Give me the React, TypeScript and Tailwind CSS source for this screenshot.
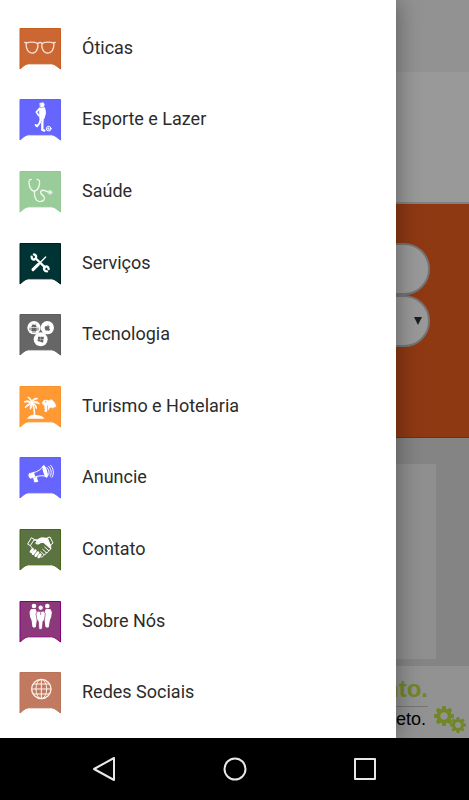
import React, { ReactNode } from "react";
import { FaApple, FaWindows } from "react-icons/fa";

const Badge = ({ color, edge, children }: { color: string; edge: string; children: ReactNode }) => (
  <svg viewBox="0 0 126 126" className="mt-0.5 h-[42px] w-[42px] shrink-0" aria-hidden="true">
    <path
      d="M3 1.500H124.500V123C114 116 108 108 98 107.500H28C18 108 12 116 3 123Z"
      fill={color}
      stroke={edge}
      strokeWidth="3"
    />
    {children}
  </svg>
);

const Glasses = () => (
  <g fill="none" stroke="#f6ddcf" strokeWidth="4" strokeLinecap="round">
    <path d="M21 46C30 41 46 41 55 46C59 52 55 74 42 75C28 77 21 64 21 46Z" />
    <path d="M70 46C78 41 96 41 105 46C105 64 98 77 84 75C70 74 66 52 70 46Z" />
    <path d="M56 47C60 43 66 43 70 47M22 44L17 43M104 44L109 43" />
  </g>
);

const Player = () => (
  <g stroke="#fff" fill="none" strokeLinecap="round" strokeLinejoin="round">
    <path d="M63 13L73 11L76 17L73 24L65 24Z" fill="#fff" strokeWidth="2" />
    <path d="M61 28L76 26L79 38L76 58L62 59L61 42Z" fill="#fff" strokeWidth="2" />
    <path d="M62 28L52 39L59 50M76 28L78 44L74 54" strokeWidth="5" />
    <path d="M66 58L62 72L54 82L50 78" strokeWidth="6" />
    <path d="M71 58L70 74L70 93L76 95" strokeWidth="7" />
    <circle cx="89" cy="89" r="7" strokeWidth="3" />
    <path d="M89 83V86M83 88L86 89M94 87L92 89M86 94L88 91M92 94L90 91" strokeWidth="2" />
    <circle cx="89" cy="89" r="2" fill="#fff" stroke="none" />
  </g>
);

const Stethoscope = () => (
  <g fill="none" stroke="#eef9ee" strokeWidth="4" strokeLinecap="round">
    <path d="M37 25C29 25 29 34 31 42C33 52 38 59 45 60C54 60 59 51 61 42C63 33 62 25 54 25" />
    <path d="M46 60C46 78 50 91 61 92C74 92 79 84 75 77C70 70 61 69 66 60C71 54 80 60 87 63" />
    <circle cx="93" cy="64" r="6" strokeWidth="2" />
    <circle cx="93" cy="64" r="2" fill="#eef9ee" />
  </g>
);

const Tools = () => (
  <g stroke="#fff" fill="none" strokeLinecap="round">
    <path d="M80 42L57 65" strokeWidth="4" />
    <path d="M58 64L42 80" strokeWidth="9" />
    <path d="M52 48L78 73" strokeWidth="7" />
    <path d="M45 34C53 36 53 44 47 49C42 51 38 48 38 41" strokeWidth="7" />
    <path d="M84 85C76 85 72 77 77 72C82 68 88 71 89 78" strokeWidth="7" />
  </g>
);

const Robot = () => (
  <g fill="#666" stroke="#666" strokeLinecap="round">
    <path d="M37 39C38 29 52 29 53 39Z" stroke="none" />
    <path d="M37 41H53V51H37Z" stroke="none" />
    <path d="M33 42V48M57 42V48M42 51V55M48 51V55" strokeWidth="3" />
    <path d="M39 29L41 32M51 29L49 32" strokeWidth="1" />
  </g>
);

const Systems = () => (
  <g fill="#666">
    <circle cx="45" cy="41" r="20" fill="#fff" />
    <circle cx="85" cy="41" r="20" fill="#fff" />
    <circle cx="65" cy="76" r="21" fill="#fff" />
    <Robot />
    <g color="#666">
      <FaApple x="74" y="30" size="22" />
      <g transform="rotate(8 65 76)">
        <FaWindows x="55" y="66" size="20" />
      </g>
    </g>
  </g>
);

const Palm = () => (
  <g fill="#fff" stroke="#fff" strokeLinecap="round">
    <path d="M24 98C30 87 42 84 52 87C63 87 72 91 76 98Z" stroke="none" />
    <path d="M39 50C45 62 47 75 46 88" fill="none" strokeWidth="5" />
    <path
      d="M39 51C31 43 22 43 15 48C25 47 32 49 39 51C30 53 20 57 18 66C27 58 34 56 39 51C34 58 33 64 34 70C38 64 40 58 39 51C46 56 50 61 52 68C53 58 48 53 39 51C48 49 55 51 61 54C57 45 48 44 39 51C42 43 49 39 57 38C46 34 39 40 39 51C37 40 33 34 26 33C32 39 36 44 39 51Z"
      strokeWidth="3"
      strokeLinejoin="round"
    />
    <path d="M72 46C76 41 86 41 89 46L88 56L84 59V75L80 78L77 74L79 70L77 67V59L71 54Z" strokeWidth="2" />
    <path d="M89 44L98 41L107 51L111 62L104 63L101 67L97 63L91 66L88 56Z" strokeWidth="2" />
    <path d="M89 59V70" strokeWidth="4" />
    <circle cx="80" cy="47" r="2" fill="#ff9933" stroke="none" />
  </g>
);

const Megaphone = () => (
  <g fill="none" stroke="#fff" strokeLinecap="round" strokeLinejoin="round">
    <path d="M31 50L44 46L48 60L34 64C29 60 28 54 31 50Z" fill="#fff" strokeWidth="2" />
    <path d="M43 47C57 44 66 37 73 27L83 59C73 55 62 55 48 60" strokeWidth="3" />
    <path d="M73 27C80 26 88 58 83 60C78 59 70 35 73 27Z" fill="#fff" strokeWidth="4" />
    <path d="M44 62L47 75L57 73L54 69L53 60" fill="#fff" strokeWidth="3" />
    <path d="M84 32C90 37 92 47 89 54M89 28C97 35 99 48 94 58M95 25C104 34 106 51 99 61" strokeWidth="3" />
  </g>
);

const Hands = () => (
  <g fill="none" stroke="#fff" strokeLinecap="round" strokeLinejoin="round">
    <path d="M38 27L46 31L34 50L27 46ZM86 26L93 24L102 42L95 48Z" strokeWidth="3" />
    <path d="M46 33L59 33M86 29L70 27C62 28 55 34 51 42C54 47 61 44 66 39L74 40L95 58" strokeWidth="4" />
    <path d="M67 30L84 30L94 48L91 54L75 39L65 37L57 42L54 41C58 34 61 31 67 30Z" fill="#fff" strokeWidth="2" />
    <path d="M35 51L41 59M95 48V58" strokeWidth="3" />
    <path d="M41 61L36 68M49 65L42 74M57 71L50 80M64 77L59 84" strokeWidth="8" />
    <path d="M95 58C95 63 91 66 88 64C89 70 84 73 81 70C82 76 77 79 74 76C74 82 70 85 65 84M88 64L77 54M81 70L71 61M74 76L66 68" strokeWidth="3" />
  </g>
);

const People = () => (
  <g fill="#fff" stroke="#fff" strokeLinejoin="round">
    <circle cx="45" cy="15" r="7" stroke="none" />
    <circle cx="85" cy="15" r="7" stroke="none" />
    <path d="M36 26L49 25L53 37L52 56L49 78H42L39 57L35 49L33 34Z" strokeWidth="3" />
    <path d="M94 26L81 25L77 37L78 56L81 78H88L91 57L95 49L97 34Z" strokeWidth="3" />
    <circle cx="65" cy="20" r="8" stroke="#8b397b" strokeWidth="3" />
    <path d="M56 30L65 32L74 30L79 38L76 57L72 61L69 85H60L58 61L54 56L51 39Z" stroke="#8b397b" strokeWidth="2" />
    <path d="M65 34V42" stroke="#8b397b" strokeWidth="2" />
  </g>
);

const Globe = () => (
  <g fill="none" stroke="#fff3ec" strokeWidth="3">
    <circle cx="67" cy="51" r="29" strokeWidth="4" />
    <ellipse cx="67" cy="51" rx="16" ry="29" />
    <path d="M67 22V80M38 51H96M43 36H91M43 66H91" />
  </g>
);

const categories = [
  { name: "Óticas", color: "#cc6633", edge: "#c65f20", icon: <Glasses /> },
  { name: "Esporte e Lazer", color: "#6666ff", edge: "#6262f5", icon: <Player /> },
  { name: "Saúde", color: "#99cc99", edge: "#94c994", icon: <Stethoscope /> },
  { name: "Serviços", color: "#003333", edge: "#001f20", icon: <Tools /> },
  { name: "Tecnologia", color: "#666666", edge: "#5c5c5c", icon: <Systems /> },
  { name: "Turismo e Hotelaria", color: "#ff9933", edge: "#fb942c", icon: <Palm /> },
  { name: "Anuncie", color: "#6666ff", edge: "#6060fa", icon: <Megaphone /> },
  { name: "Contato", color: "#5a7340", edge: "#456616", icon: <Hands /> },
  { name: "Sobre Nós", color: "#8b397b", edge: "#820078", icon: <People /> },
  { name: "Redes Sociais", color: "#c17a60", edge: "#b87358", icon: <Globe /> },
];

const Gear = ({ x, y, r }: { x: number; y: number; r: number }) => (
  <g transform={`translate(${x} ${y}) scale(${r})`}>
    <circle r="0.560" fill="none" stroke="#bde042" strokeWidth="0.360" />
    {[0, 45, 90, 135, 180, 225, 270, 315].map((angle) => (
      <path key={angle} d="M-.24 -.66L-.16 -1H.16L.24 -.66Z" fill="#bde042" transform={`rotate(${angle})`} />
    ))}
  </g>
);

const Page = () => (
  <div className="flex flex-1 flex-col bg-white">
    <header className="h-[72px] bg-[#f3f3f3]" />
    <div className="h-[132px] border-b-2 border-[#d8d8d8]" />
    <form className="flex h-[234px] flex-col border-b border-[#d04a10] bg-[#ee5f20] px-[39px] pt-[39px]">
      <input
        type="text"
        aria-label="Buscar"
        className="h-[52px] w-full rounded-full border-2 border-[#c4c4c4] bg-white px-5"
      />
      <div className="relative">
        <select
          aria-label="Categoria"
          className="h-[52px] w-full appearance-none rounded-full border-2 border-[#c4c4c4] bg-white px-5"
        />
        <svg viewBox="0 0 8 8" className="absolute top-[22px] right-2 h-2 w-2" aria-hidden="true">
          <path d="M0 0H8L4 8Z" fill="#333" />
        </svg>
      </div>
    </form>
    <div className="flex flex-1 flex-col bg-[#dcdcdc] px-[33px] pt-[26px] pb-[7px]">
      <div className="flex-1 bg-[#efefef]" />
    </div>
    <footer className="flex h-[72px] justify-end gap-1.5 bg-[#f3f3f3] pr-[3px]">
      <div className="pt-2 text-right font-['Liberation_Sans']">
        <p className="border-b border-[#c4c4c4] pb-0.5 text-2xl leading-[30px] font-bold text-[#bde042]">Atendimento.</p>
        <p className="pr-0.5 text-lg leading-6 text-black">Completo.</p>
      </div>
      <svg viewBox="0 0 32 28" className="mt-10 h-7 w-8" aria-hidden="true">
        <Gear x={10} y={10} r={10} />
        <Gear x={24} y={19} r={8} />
      </svg>
    </footer>
  </div>
);

const Drawer = () => (
  <nav className="absolute inset-y-0 right-[73px] left-0 bg-white shadow-[0_0_24px_rgba(0,0,0,0.4)]">
    <ul className="flex h-full flex-col pt-3 pb-2.5">
      {categories.map((item) => (
        <li key={item.name} className="flex-1">
          <a href="#" className="flex h-full items-center gap-[21px] pl-[19px] font-[Roboto] text-lg text-[#2b2b2b]">
            <Badge color={item.color} edge={item.edge}>
              {item.icon}
            </Badge>
            {item.name}
          </a>
        </li>
      ))}
    </ul>
  </nav>
);

const SystemBar = () => (
  <div className="flex h-[62px] items-center justify-center gap-[106px] bg-black text-[#e8e8e8]">
    <button aria-label="Voltar">
      <svg viewBox="0 0 24 24" className="h-6 w-6" fill="none" stroke="currentColor" strokeWidth="2" strokeLinejoin="round">
        <path d="M21 1V23L1 12Z" />
      </svg>
    </button>
    <button aria-label="Início">
      <svg viewBox="0 0 24 24" className="h-6 w-6" fill="none" stroke="currentColor" strokeWidth="2">
        <circle cx="12" cy="12" r="10.500" />
      </svg>
    </button>
    <button aria-label="Recentes">
      <svg viewBox="0 0 24 24" className="h-6 w-6" fill="none" stroke="currentColor" strokeWidth="2" strokeLinejoin="round">
        <path d="M2 2H22V22H2Z" />
      </svg>
    </button>
  </div>
);

export default function App() {
  return (
    <div className="flex min-h-screen flex-col">
      <div className="relative flex flex-1 flex-col overflow-hidden">
        <Page />
        <div className="absolute inset-0 bg-black/40" />
        <Drawer />
      </div>
      <SystemBar />
    </div>
  );
}
